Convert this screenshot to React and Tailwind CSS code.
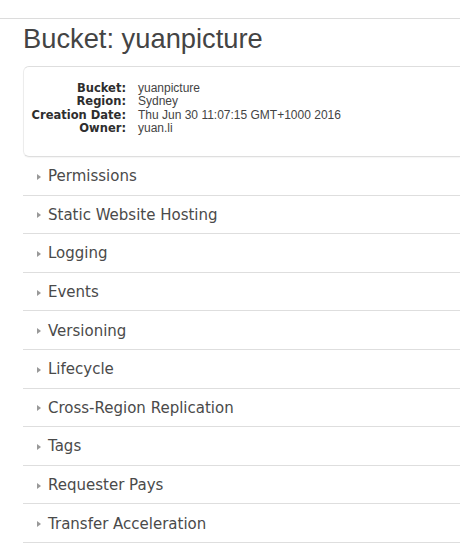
import React from 'react';

const details = [
    { label: 'Bucket:', value: 'yuanpicture' },
    { label: 'Region:', value: 'Sydney' },
    { label: 'Creation Date:', value: 'Thu Jun 30 11:07:15 GMT+1000 2016' },
    { label: 'Owner:', value: 'yuan.li' },
];

const sections = [
    'Permissions',
    'Static Website Hosting',
    'Logging',
    'Events',
    'Versioning',
    'Lifecycle',
    'Cross-Region Replication',
    'Tags',
    'Requester Pays',
    'Transfer Acceleration',
];

const App = () => {
    return (
        <div className="w-[460px] h-[549px] overflow-hidden bg-white">
            <div className="h-[18px]" />
            <div className="border-t border-[#dcdcdc]" />

            <div className="pl-[23px]">
                {/* Title */}
                <h1 className="mt-[3.5px] h-[32px] text-[27.3px] leading-[32px] text-[#444] font-['Liberation_Sans',Arial,sans-serif]">
                    Bucket: yuanpicture
                </h1>

                {/* Properties box */}
                <div className="mt-[11.5px] h-[91px] rounded-l-[6px] border-y border-l border-y-[#dedede] border-l-[#ececec] pt-[15px] shadow-[0_1px_1px_rgba(0,0,0,0.04)]">
                    <div className="grid grid-cols-[102px_1fr] gap-x-[12px]">
                        {details.map((d) => (
                            <React.Fragment key={d.label}>
                                <div className="text-right text-[11.5px] leading-[13.3px] font-bold text-[#2e2e2e] font-['DejaVu_Sans',Verdana,sans-serif]">
                                    {d.label}
                                </div>
                                <div className="text-[12px] leading-[13.3px] text-[#444] font-['Liberation_Sans',Arial,sans-serif]">
                                    {d.value}
                                </div>
                            </React.Fragment>
                        ))}
                    </div>
                </div>

                {/* Collapsible sections */}
                <div>
                    {sections.map((s) => (
                        <div
                            key={s}
                            className="h-[38.6px] pt-[2px] flex items-center border-b border-[#dedede] text-[15px] text-[#4a4a4a] font-['DejaVu_Sans',Verdana,sans-serif]"
                        >
                            <span className="ml-[14px] mr-[7px] w-0 h-0 border-y-[3.5px] border-y-transparent border-l-[4px] border-l-[#999]" />
                            <span className="leading-none">{s}</span>
                        </div>
                    ))}
                </div>
            </div>
        </div>
    );
};

export default App;
